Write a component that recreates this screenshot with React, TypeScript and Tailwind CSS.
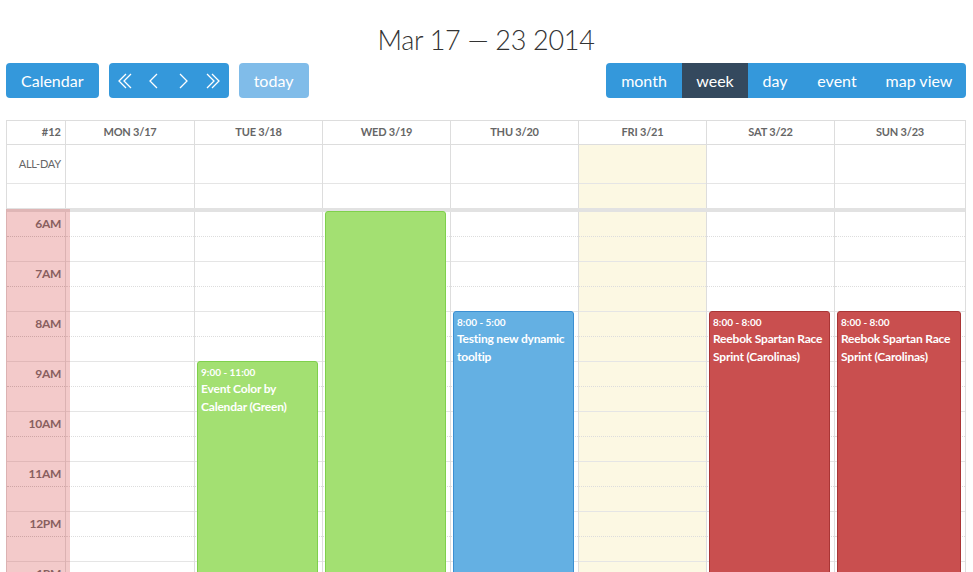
const days = ['MON 3/17', 'TUE 3/18', 'WED 3/19', 'THU 3/20', 'FRI 3/21', 'SAT 3/22', 'SUN 3/23'];
const hours = ['6AM', '7AM', '8AM', '9AM', '10AM', '11AM', '12PM', '1PM', '2PM'];
const slots = Array.from({ length: hours.length * 2 }, (_, i) => i);

type CalEvent = {
  day: number;
  start: number; // hour offset from 6AM
  time?: string;
  title?: string;
  color: string;
};

const events: CalEvent[] = [
  { day: 1, start: 3, time: '9:00 - 11:00', title: 'Event Color by Calendar (Green)', color: 'green' },
  { day: 2, start: 0, color: 'green' },
  { day: 3, start: 2, time: '8:00 - 5:00', title: 'Testing new dynamic tooltip', color: 'blue' },
  { day: 5, start: 2, time: '8:00 - 8:00', title: 'Reebok Spartan Race Sprint (Carolinas)', color: 'red' },
  { day: 6, start: 2, time: '8:00 - 8:00', title: 'Reebok Spartan Race Sprint (Carolinas)', color: 'red' },
];

const colorClasses: Record<string, string> = {
  green: 'bg-[#a3e072] border-[#7fd04c]',
  blue: 'bg-[#64b0e3] border-[#3b8fd2]',
  red: 'bg-[#c94f4f] border-[#a93535]',
};

const gridCols = 'grid grid-cols-[59px_129px_repeat(5,128px)_1fr]';

// ナビゲーション用の細い矢印
function Arrow({ dir, double }: { dir: 'left' | 'right'; double?: boolean }) {
  const pts = (x: number) =>
    dir === 'left' ? `${x + 7},1 ${x},8 ${x + 7},15` : `${x},1 ${x + 7},8 ${x},15`;
  return (
    <svg width={double ? 14 : 9} height={16} viewBox={double ? '-0.5 0 14 16' : '-0.5 0 9 16'} fill="none" stroke="currentColor" strokeWidth={1.3}>
      <polyline points={pts(0.5)} />
      {double && <polyline points={pts(5.5)} />}
    </svg>
  );
}

function EventBlock({ ev }: { ev: CalEvent }) {
  return (
    <div
      className={`absolute left-[2px] right-[4px] bottom-[-200px] rounded-[3px] border px-[3px] pt-[2px] text-white ${colorClasses[ev.color]}`}
      style={{ top: ev.start * 50 - 1 }}
    >
      {ev.time && <div className="text-[10px] font-bold leading-[16px]">{ev.time}</div>}
      {ev.title && <div className="text-[12px] font-bold leading-[18px] tracking-[-0.2px]">{ev.title}</div>}
    </div>
  );
}

export default function App() {
  return (
    <div className="h-[572px] overflow-hidden bg-white font-['Lato','Open_Sans',sans-serif]">
      <div className="ml-[6px] w-[960px]">
        {/* タイトル */}
        <h2 className="pt-[24px] text-center text-[27px] font-light leading-[32px] tracking-[-0.3px] text-[#333]">
          Mar 17 — 23 2014
        </h2>

        {/* ツールバー */}
        <div className="mt-[7px] flex items-center justify-between">
          <div className="flex items-center gap-[10px]">
            <button className="h-[35px] rounded-[4px] bg-[#3498db] px-[15px] text-[16px] text-white">Calendar</button>
            <div className="flex h-[35px] w-[120px] items-center rounded-[4px] bg-[#3498db] text-white">
              <span className="flex w-[30px] justify-center pl-[2px]"><Arrow dir="left" double /></span>
              <span className="flex w-[30px] justify-center"><Arrow dir="left" /></span>
              <span className="flex w-[30px] justify-center"><Arrow dir="right" /></span>
              <span className="flex w-[30px] justify-center pr-[2px]"><Arrow dir="right" double /></span>
            </div>
            <button className="h-[35px] w-[70px] rounded-[4px] bg-[#80bce9] text-[16px] text-white">today</button>
          </div>
          <div className="flex h-[35px] overflow-hidden rounded-[4px] text-[16px] text-white">
            <button className="w-[76px] bg-[#3498db]">month</button>
            <button className="w-[66px] bg-[#34495e]">week</button>
            <button className="w-[54px] bg-[#3498db]">day</button>
            <button className="w-[70px] bg-[#3498db]">event</button>
            <button className="w-[94px] bg-[#3498db]">map view</button>
          </div>
        </div>

        {/* カレンダー本体 */}
        <div className="mt-[22px] border border-[#ddd] text-[#666]">
          {/* 曜日ヘッダー */}
          <div className={`${gridCols} border-b border-[#ddd]`}>
            <div className="flex h-[23px] items-center justify-end border-r border-[#ddd] pr-[4px] text-[11px] font-bold">#12</div>
            {days.map((d, i) => (
              <div
                key={d}
                className={`flex h-[23px] items-center justify-center text-[11px] font-bold tracking-[-0.2px] ${i < 6 ? 'border-r border-[#ddd]' : ''}`}
              >
                {d}
              </div>
            ))}
          </div>

          {/* 終日 */}
          <div className={gridCols}>
            <div className="border-r border-[#ddd]">
              <div className="flex h-[39px] items-center justify-end border-b border-[#e5e5e5] pr-[4px] text-[11px] tracking-[-0.2px]">ALL-DAY</div>
              <div className="h-[24px]" />
            </div>
            {days.map((d, i) => (
              <div key={d} className={`${i < 6 ? 'border-r border-[#ddd]' : ''} ${i === 4 ? 'bg-[#fcf8e3]' : ''}`}>
                <div className="h-[39px] border-b border-[#e5e5e5]" />
                <div className="h-[24px]" />
              </div>
            ))}
          </div>

          {/* 時間グリッド */}
          <div className="relative">
            <div className="h-[4px] bg-[#e2e2e2]" />
            <div className={gridCols}>
              <div className="border-r border-[#ddd]">
                {slots.map((s) => (
                  <div
                    key={s}
                    className={`flex h-[25px] items-center justify-end border-b pr-[4px] text-[12px] font-bold tracking-[-0.3px] ${s % 2 === 0 ? 'border-dotted border-[#ccc]' : 'border-[#e5e5e5]'}`}
                  >
                    {s % 2 === 0 ? hours[s / 2] : ''}
                  </div>
                ))}
              </div>
              {days.map((d, i) => (
                <div
                  key={d}
                  className={`relative ${i < 6 ? 'border-r border-[#ddd]' : ''} ${i === 4 ? 'bg-[#fcf8e3]' : ''}`}
                >
                  {slots.map((s) => (
                    <div
                      key={s}
                      className={`h-[25px] border-b ${s % 2 === 0 ? 'border-dotted border-[#ddd]' : 'border-[#e5e5e5]'}`}
                    />
                  ))}
                  {events
                    .filter((ev) => ev.day === i)
                    .map((ev, k) => (
                      <EventBlock key={k} ev={ev} />
                    ))}
                </div>
              ))}
            </div>
            {/* 現在時刻ハイライト */}
            <div className="absolute bottom-0 left-[-1px] top-[1px] w-[64px] bg-[rgba(214,80,80,0.3)]" />
          </div>
        </div>
      </div>
    </div>
  );
}
